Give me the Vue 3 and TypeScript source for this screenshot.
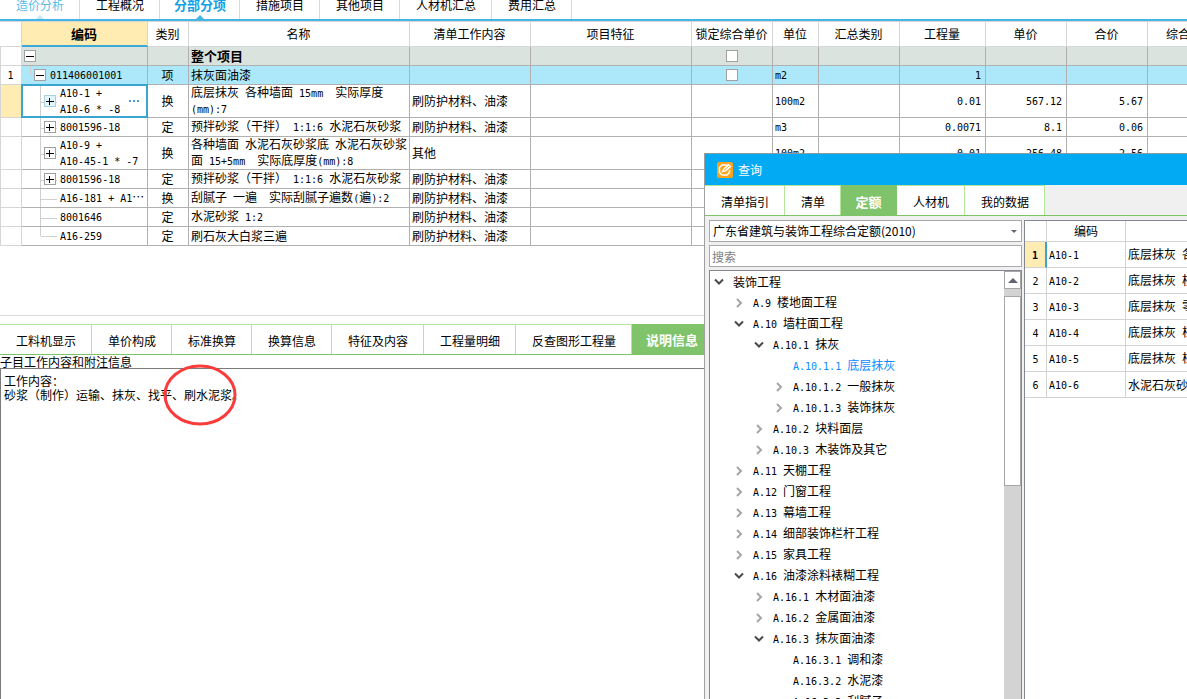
<script setup lang="ts">
import { h, ref, type FunctionalComponent } from 'vue'

interface Row {
  no?: string
  level: number
  toggle?: '+' | '-'
  code?: string
  kind?: string
  name: string
  work?: string
  unit?: string
  qty?: string
  price?: string
  total?: string
  check?: boolean
  tone?: 'group' | 'item' | 'current'
  tall?: boolean
  last?: boolean
}

interface Node {
  level: number
  state: 'open' | 'closed' | 'leaf'
  label: string
  active?: boolean
}

// Latin runs are set in a half-width monospace so that two of them fill one Han character.
const Mixed: FunctionalComponent<{ text: string }> = (props) =>
  h(
    'span',
    { class: 'mixed' },
    (props.text.match(/[\x20-\x7e]+|[^\x20-\x7e]+/g) ?? []).map((run) =>
      /^[\x20-\x7e]/.test(run) ? h('span', { class: 'half' }, run) : run,
    ),
  )
Mixed.props = ['text']

const mainTabs = ['造价分析', '工程概况', '分部分项', '措施项目', '其他项目', '人材机汇总', '费用汇总']
const mainActive = ref('分部分项')

const columns = ['', '编码', '类别', '名称', '清单工作内容', '项目特征', '锁定综合单价', '单位', '汇总类别', '工程量', '单价', '合价', '综合单价']

const coat = '刷防护材料、油漆'
const mortar = '预拌砂浆（干拌） 1:1:6 水泥石灰砂浆'
const rows: Row[] = [
  { level: 0, toggle: '-', name: '整个项目', check: true, tone: 'group' },
  { no: '1', level: 1, toggle: '-', code: '011406001001', kind: '项', name: '抹灰面油漆', unit: 'm2', qty: '1', check: true, tone: 'item' },
  { level: 2, toggle: '+', code: 'A10-1 +\nA10-6 * -8', kind: '换', name: '底层抹灰 各种墙面 15mm  实际厚度\n(mm):7', work: coat, unit: '100m2', qty: '0.01', price: '567.12', total: '5.67', tone: 'current', tall: true },
  { level: 2, toggle: '+', code: '8001596-18', kind: '定', name: mortar, work: coat, unit: 'm3', qty: '0.0071', price: '8.1', total: '0.06' },
  { level: 2, toggle: '+', code: 'A10-9 +\nA10-45-1 * -7', kind: '换', name: '各种墙面 水泥石灰砂浆底 水泥石灰砂浆\n面 15+5mm  实际底厚度(mm):8', work: '其他', unit: '100m2', qty: '0.01', price: '256.48', total: '2.56', tall: true },
  { level: 2, toggle: '+', code: '8001596-18', kind: '定', name: mortar, work: coat },
  { level: 2, code: 'A16-181 + A1⋯', kind: '换', name: '刮腻子 一遍  实际刮腻子遍数(遍):2', work: coat },
  { level: 2, code: '8001646', kind: '定', name: '水泥砂浆 1:2', work: coat },
  { level: 2, code: 'A16-259', kind: '定', name: '刷石灰大白浆三遍', work: coat, last: true },
]

const detailTabs = ['工料机显示', '单价构成', '标准换算', '换算信息', '特征及内容', '工程量明细', '反查图形工程量', '说明信息']
const detailActive = ref('说明信息')
const notes = '工作内容：\n砂浆（制作）运输、抹灰、找平、刷水泥浆。'

const queryTabs = ['清单指引', '清单', '定额', '人材机', '我的数据']
const queryActive = ref('定额')
const keyword = ref('')

const nodes: Node[] = [
  { level: 0, state: 'open', label: '装饰工程' },
  { level: 1, state: 'closed', label: 'A.9 楼地面工程' },
  { level: 1, state: 'open', label: 'A.10 墙柱面工程' },
  { level: 2, state: 'open', label: 'A.10.1 抹灰' },
  { level: 3, state: 'leaf', label: 'A.10.1.1 底层抹灰', active: true },
  { level: 3, state: 'closed', label: 'A.10.1.2 一般抹灰' },
  { level: 3, state: 'closed', label: 'A.10.1.3 装饰抹灰' },
  { level: 2, state: 'closed', label: 'A.10.2 块料面层' },
  { level: 2, state: 'closed', label: 'A.10.3 木装饰及其它' },
  { level: 1, state: 'closed', label: 'A.11 天棚工程' },
  { level: 1, state: 'closed', label: 'A.12 门窗工程' },
  { level: 1, state: 'closed', label: 'A.13 幕墙工程' },
  { level: 1, state: 'closed', label: 'A.14 细部装饰栏杆工程' },
  { level: 1, state: 'closed', label: 'A.15 家具工程' },
  { level: 1, state: 'open', label: 'A.16 油漆涂料裱糊工程' },
  { level: 2, state: 'closed', label: 'A.16.1 木材面油漆' },
  { level: 2, state: 'closed', label: 'A.16.2 金属面油漆' },
  { level: 2, state: 'open', label: 'A.16.3 抹灰面油漆' },
  { level: 3, state: 'leaf', label: 'A.16.3.1 调和漆' },
  { level: 3, state: 'leaf', label: 'A.16.3.2 水泥漆' },
  { level: 3, state: 'leaf', label: 'A.16.3.3 刮腻子' },
]

const quotas = [
  ['A10-1', '底层抹灰 各种墙面'],
  ['A10-2', '底层抹灰 柱面'],
  ['A10-3', '底层抹灰 零星'],
  ['A10-4', '底层抹灰 栏杆'],
  ['A10-5', '底层抹灰 栏板'],
  ['A10-6', '水泥石灰砂浆'],
]
</script>

<template>
  <div class="app" lang="zh-CN">
    <nav class="main-tabs" role="tablist">
      <button
        v-for="tab in mainTabs"
        :key="tab"
        type="button"
        role="tab"
        :aria-selected="tab === mainActive"
        :class="{ active: tab === mainActive, pale: tab === '造价分析' }"
        @click="mainActive = tab"
      >{{ tab }}</button>
    </nav>

    <section class="sheet-pane">
      <table class="sheet">
        <colgroup>
          <col v-for="(c, i) in columns" :key="i" :class="'c' + i" />
        </colgroup>
        <thead>
          <tr>
            <th v-for="(c, i) in columns" :key="i" :class="{ picked: i === 1 }">{{ c }}</th>
          </tr>
        </thead>
        <tbody>
          <tr v-for="(r, i) in rows" :key="i" :class="[r.tone, { tall: r.tall }]">
            <td class="num"><Mixed v-if="r.no" :text="r.no" /></td>
            <td class="code" :class="['l' + r.level, { last: r.last }]">
              <i v-if="r.level" class="guide"></i>
              <div class="code-row">
                <button v-if="r.toggle" type="button" class="toggle" :aria-label="r.toggle === '+' ? '展开' : '折叠'">
                  <svg viewBox="0 0 10 10" width="10" height="10">
                    <path :d="r.toggle === '+' ? 'M1 5H9V6H1ZM4 2H5V9H4Z' : 'M1 5H9V6H1Z'" />
                  </svg>
                </button>
                <i v-else class="no-toggle"></i>
                <Mixed v-if="r.code" :text="r.code" />
                <button v-if="r.tone === 'current'" type="button" class="more" aria-label="更多"><i></i><i></i><i></i></button>
              </div>
            </td>
            <td class="mid">{{ r.kind }}</td>
            <td class="name"><Mixed :text="r.name" /></td>
            <td>{{ r.work }}</td>
            <td></td>
            <td class="mid"><input v-if="r.check" type="checkbox" :aria-label="'锁定综合单价 ' + r.name" /></td>
            <td><Mixed v-if="r.unit" :text="r.unit" /></td>
            <td></td>
            <td class="val"><Mixed v-if="r.qty" :text="r.qty" /></td>
            <td class="val"><Mixed v-if="r.price" :text="r.price" /></td>
            <td class="val"><Mixed v-if="r.total" :text="r.total" /></td>
            <td></td>
          </tr>
        </tbody>
      </table>
    </section>

    <section class="detail">
      <nav class="green-tabs" role="tablist">
        <button
          v-for="tab in detailTabs"
          :key="tab"
          type="button"
          role="tab"
          :aria-selected="tab === detailActive"
          :class="{ active: tab === detailActive }"
          @click="detailActive = tab"
        >{{ tab }}</button>
      </nav>
      <label class="notes-label" for="notes">子目工作内容和附注信息</label>
      <div class="notes-box">
        <textarea id="notes" readonly :value="notes"></textarea>
        <svg class="mark" viewBox="0 0 74 62" width="74" height="62">
          <ellipse cx="37" cy="31" rx="35" ry="29" fill="none" stroke="#fa3c3c" stroke-width="3" />
        </svg>
      </div>
    </section>

    <section class="dialog" role="dialog" aria-labelledby="dialog-title">
      <header class="titlebar">
        <svg viewBox="0 0 16 16" width="16" height="16">
          <rect width="16" height="16" rx="2" fill="#fba31c" />
          <path d="M10 3H5L2.500 5.500V10.500L5 13H10L12.500 10.500V8" fill="none" stroke="#fff" stroke-width="1.500" />
          <path d="M4.500 10.500 6 7 11.500 1.500 14.500 4.500 9 9.500Z" fill="#fff" />
          <path d="M7 8.500 12.500 3.500" stroke="#fba31c" stroke-width="1" />
        </svg>
        <h1 id="dialog-title">查询</h1>
      </header>
      <nav class="green-tabs" role="tablist">
        <button
          v-for="tab in queryTabs"
          :key="tab"
          type="button"
          role="tab"
          :aria-selected="tab === queryActive"
          :class="{ active: tab === queryActive }"
          @click="queryActive = tab"
        >{{ tab }}</button>
      </nav>
      <div class="dialog-body">
        <div class="browse">
          <div class="combo">
            <select aria-label="定额库">
              <option>广东省建筑与装饰工程综合定额(2010)</option>
            </select>
            <svg viewBox="0 0 6 3" width="6" height="3"><path d="M0 0H6L3 3Z" fill="#5e6472" /></svg>
          </div>
          <input v-model="keyword" class="search" type="text" placeholder="搜索" aria-label="搜索" />
          <div class="tree-box">
            <ul class="tree" role="tree">
              <li v-for="n in nodes" :key="n.label" role="treeitem" :class="['t' + n.level, { active: n.active }]">
                <svg viewBox="0 0 10 10" width="10" height="10">
                  <path v-if="n.state === 'open'" d="M1 2.500 5 6.500 9 2.500" fill="none" stroke="#4a4a4a" stroke-width="2" />
                  <path v-else-if="n.state === 'closed'" d="M3 1 7 5 3 9" fill="none" stroke="#a6a6a6" stroke-width="2" />
                </svg>
                <Mixed :text="n.label" />
              </li>
            </ul>
            <div class="scroll">
              <button type="button" class="up" aria-label="向上滚动">
                <svg viewBox="0 0 10 5" width="10" height="5"><path d="M5 0 10 5H0Z" fill="#5e6472" /></svg>
              </button>
              <div class="thumb"></div>
            </div>
          </div>
        </div>
        <div class="quota-box">
          <table class="quota">
            <colgroup><col class="q0" /><col class="q1" /><col class="q2" /></colgroup>
            <thead>
              <tr><th></th><th>编码</th><th></th></tr>
            </thead>
            <tbody>
              <tr v-for="(q, i) in quotas" :key="q[0]" :class="{ current: i === 0 }">
                <td class="qn"><Mixed :text="String(i + 1)" /></td>
                <td><Mixed :text="q[0]" /></td>
                <td><Mixed :text="q[1]" /></td>
              </tr>
            </tbody>
          </table>
        </div>
      </div>
    </section>
  </div>
</template>

<style>
html,
body {
  background: #fff;
  overflow: hidden;
}
.mixed {
  white-space: pre;
}
.mixed .half {
  font-family: 'DejaVu Sans Mono', monospace;
  font-size: 10px;
}
</style>

<style scoped>
.app {
  position: relative;
  display: flex;
  flex-direction: column;
  height: 100vh;
  overflow: hidden;
  color: #000;
  font: 12px/14px 'Noto Sans CJK SC', sans-serif;
}
button,
input,
select,
textarea {
  margin: 0;
  padding: 0;
  border: 0;
  border-radius: 0;
  color: inherit;
  font: inherit;
  background: none;
  appearance: none;
  outline: 0;
  box-sizing: border-box;
}
svg {
  display: block;
  flex: none;
}

.main-tabs {
  display: flex;
  flex: none;
  height: 31px;
  margin-top: -10px;
  border-bottom: 2px solid #45b5e6;
  box-sizing: border-box;
}
.main-tabs button {
  position: relative;
  padding: 0 15px 0 16px;
  border-right: 1px solid #d9d9d9;
  line-height: 12px;
  white-space: nowrap;
}
.main-tabs .pale {
  color: #58bdeb;
}
.main-tabs .active {
  padding: 0 13px 0 14px;
  color: #12a1e6;
  font-size: 13px;
  font-weight: 700;
}
.main-tabs .active::after,
.main-tabs .pale::after {
  content: '';
  position: absolute;
  left: calc(50% - 4px);
  bottom: 0;
  border: 4px solid transparent;
  border-top: 0;
  border-bottom-color: #45b5e6;
}
.main-tabs .pale::after {
  border-bottom-color: #c5e8f7;
}

.sheet-pane {
  flex: 0 0 42%;
  overflow: hidden;
}
table {
  border-collapse: separate;
  border-spacing: 0;
  table-layout: fixed;
}
th,
td {
  box-sizing: border-box;
  padding: 0;
  text-align: left;
  white-space: nowrap;
  overflow: hidden;
}
.sheet {
  width: 1234px;
}
.c0 { width: 22px; }
.c1 { width: 126px; }
.c2 { width: 41px; }
.c3 { width: 221px; }
.c4 { width: 121px; }
.c5 { width: 161px; }
.c6 { width: 81px; }
.c7 { width: 46px; }
.c8 { width: 81px; }
.c9 { width: 86px; }
.c10 { width: 81px; }
.c11 { width: 81px; }
.c12 { width: 86px; }
.sheet th {
  height: 26px;
  padding-right: 1px;
  border: 1px solid #d6d6d6;
  border-left: 0;
  font-weight: 400;
  text-align: center;
}
.sheet th.picked {
  border-bottom: 2px solid #3aa9d6;
  background: #ffecb3;
  font-size: 13px;
  font-weight: 700;
}
.sheet td {
  position: relative;
  height: 19px;
  padding-left: 2px;
  border-right: 1px solid #b0b0b0;
  border-bottom: 1px solid #b0b0b0;
}
.sheet .tall td {
  height: 33px;
}
.sheet tbody .mid {
  padding: 0 1px 0 0;
  text-align: center;
}
.sheet tbody .val {
  padding: 0 4px 0 0;
  text-align: right;
}
.sheet tbody .num {
  padding: 0 1px 0 0;
  border-color: #d6d6d6;
  border-left: 1px solid #d6d6d6;
  text-align: center;
}
.sheet .group td:not(.num) {
  background: #dae3dd;
}
.sheet .group .name {
  font-size: 13px;
  font-weight: 700;
}
.sheet .item td:not(.num) {
  background: #ade8fa;
}
.sheet .current .num {
  background: #ffecb3;
}
.sheet .current .code {
  overflow: visible;
}
.sheet .current .code::after {
  content: '';
  position: absolute;
  inset: -1px;
  border: 2px solid #3aa5d1;
  pointer-events: none;
}
.sheet input {
  display: block;
  width: 12px;
  height: 12px;
  margin: 0 auto;
  border: 1px solid #a0a0a0;
  background: #fff;
}
.code-row {
  display: flex;
  align-items: center;
  gap: 4px;
}
.sheet .l1 .code-row {
  padding-left: 10px;
}
.sheet .l2 .code-row {
  padding-left: 20px;
}
.toggle,
.no-toggle {
  position: relative;
  flex: none;
  width: 12px;
  height: 12px;
}
.toggle {
  border: 1px solid #a0a0a0;
  background: #fff;
}
.current .toggle {
  border-color: #add0dc;
  background: #e2f5fb;
}
.more {
  display: flex;
  gap: 2px;
  margin-left: auto;
  margin-right: 8px;
}
.more i {
  width: 2px;
  height: 2px;
  background: #4a9ed4;
}
.guide {
  position: absolute;
  top: 0;
  bottom: -1px;
  left: 18px;
  border-left: 1px solid #cfcfcf;
}
.guide::after {
  content: '';
  position: absolute;
  top: 50%;
  left: 0;
  width: 16px;
  border-top: 1px solid #cfcfcf;
}
.l1 .guide {
  left: 8px;
  bottom: 50%;
}
.l1 .guide::after {
  top: 100%;
  width: 4px;
}
.last .guide {
  bottom: 50%;
}
.last .guide::after {
  top: 100%;
}

.detail {
  display: flex;
  flex: 1;
  flex-direction: column;
  min-height: 0;
  padding-top: 8px;
  border-top: 1px solid #dedede;
}
.green-tabs {
  display: flex;
  flex: none;
  height: 31px;
  border-bottom: 1px solid #7cc466;
  box-sizing: border-box;
}
.green-tabs button {
  flex: none;
  min-width: 56px;
  padding: 3px 15px 0 16px;
  border-top: 1px solid #b3e59b;
  border-right: 1px solid #b3e59b;
  background: #fff;
  white-space: nowrap;
}
.green-tabs .active {
  padding: 2px 14px 0;
  border-color: #7fc36a;
  background: #7fc36a;
  color: #fff;
  font-size: 13px;
  font-weight: 700;
}
.notes-label {
  height: 13px;
  line-height: 14px;
}
.notes-box {
  position: relative;
  display: flex;
  flex: 1;
  border: 1px solid #7a7a7a;
  border-bottom: 0;
}
.notes-box textarea {
  flex: 1;
  padding: 5px 4px 5px 3px;
  resize: none;
  line-height: 14px;
}
.mark {
  position: absolute;
  left: 162px;
  top: -5px;
  pointer-events: none;
}

.dialog {
  position: absolute;
  top: 153px;
  right: 0;
  bottom: 0;
  left: 704px;
  display: flex;
  flex-direction: column;
  border-top: 1px solid #8f9aa0;
  border-left: 1px solid #a0a0a0;
  background: #f0f0f0;
}
.titlebar {
  display: flex;
  flex: none;
  align-items: center;
  gap: 5px;
  height: 31px;
  padding-left: 12px;
  background: #02a9f3;
  color: #fff;
}
.titlebar h1 {
  margin: 0;
  font-size: 12px;
  font-weight: 400;
}
.dialog-body {
  display: flex;
  flex: 1;
  gap: 2px;
  min-height: 0;
  padding: 4px 0 0 4px;
}
.browse {
  display: flex;
  flex: 0 0 313px;
  flex-direction: column;
  gap: 3px;
  min-height: 0;
}
.combo {
  position: relative;
}
.combo select {
  display: block;
  width: 100%;
  height: 22px;
  padding-left: 3px;
  border: 1px solid #a9a9a9;
  background: #fff;
}
.combo svg {
  position: absolute;
  top: 10px;
  right: 5px;
}
.search {
  flex: none;
  height: 22px;
  padding-left: 2px;
  border: 1px solid #a9a9a9;
  background: #fff;
}
.search::placeholder {
  color: #808080;
  opacity: 1;
}
.tree-box {
  display: flex;
  flex: 1;
  min-height: 0;
  overflow: hidden;
  border: 1px solid #828790;
  border-bottom: 0;
  background: #fff;
}
.tree {
  flex: 1;
  margin: 0;
  padding: 0 0 0 4px;
  list-style: none;
}
.tree li {
  display: flex;
  align-items: center;
  gap: 9px;
  height: 21px;
}
.tree .t1 { padding-left: 20px; }
.tree .t2 { padding-left: 40px; }
.tree .t3 { padding-left: 60px; }
.tree .active {
  color: #0a8cff;
}
.scroll {
  display: flex;
  flex: 0 0 17px;
  flex-direction: column;
  gap: 7px;
  background: #d3d3d3;
}
.scroll .up,
.thumb {
  border: 1px solid #a6a6a6;
  background: #fff;
}
.scroll .up {
  display: flex;
  align-items: center;
  justify-content: center;
  height: 18px;
}
.thumb {
  height: 44%;
}
.quota-box {
  flex: 1;
  overflow: hidden;
  border-top: 1px solid #828790;
  border-left: 1px solid #828790;
  background: #fff;
}
.quota {
  width: 100%;
  min-width: 300px;
}
.q0 { width: 22px; }
.q1 { width: 79px; }
.quota th {
  height: 21px;
  border-right: 1px solid #d3d3d3;
  border-bottom: 1px solid #d3d3d3;
  font-weight: 400;
  text-align: center;
}
.quota td {
  height: 26px;
  padding-left: 2px;
  border-right: 1px solid #d3d3d3;
  border-bottom: 1px solid #d3d3d3;
}
.quota .qn {
  padding: 0;
  text-align: center;
}
.quota .current .qn {
  border-right: 2px solid #3aa5d1;
  background: #ffecb3;
  font-weight: 700;
}
</style>
